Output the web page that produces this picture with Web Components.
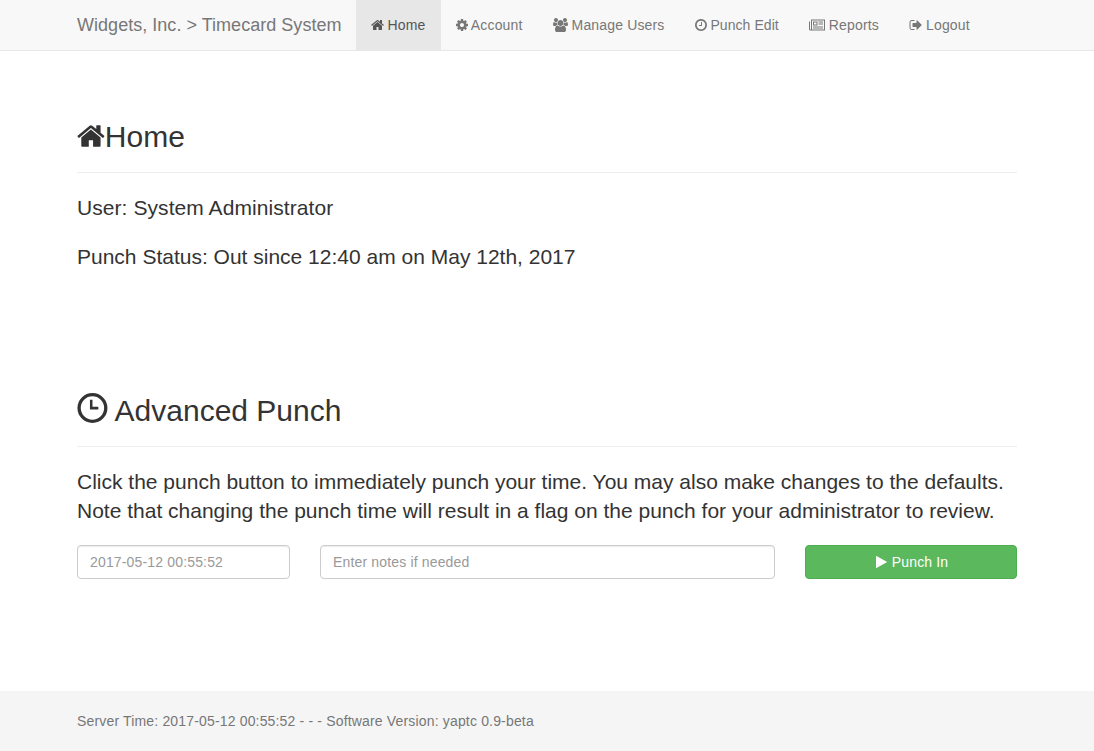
<!DOCTYPE html>
<html lang="en">
<head>
<meta charset="utf-8">
<title>Timecard System</title>
<style>
  html, body { margin: 0; padding: 0; }
  body {
    font-family: "Liberation Sans", Arial, sans-serif;
    font-size: 14px;
    line-height: 1.42857;
    color: #333;
    background: #fff;
    min-height: 751px;
    display: flex;
    flex-direction: column;
  }
</style>
</head>
<body>
  <app-navbar brand="Widgets, Inc. &gt; Timecard System">
    <nav-link active><app-icon name="home"></app-icon> Home</nav-link>
    <nav-link><app-icon name="cog"></app-icon> Account</nav-link>
    <nav-link><app-icon name="users"></app-icon> Manage Users</nav-link>
    <nav-link style="--track: .06px"><app-icon name="clock"></app-icon> Punch Edit</nav-link>
    <nav-link><app-icon name="news"></app-icon> Reports</nav-link>
    <nav-link><app-icon name="signout"></app-icon> Logout</nav-link>
  </app-navbar>

  <page-section first>
    <span slot="title"><app-icon name="home"></app-icon>Home</span>
    <lead-text style="letter-spacing: .07px">User: System Administrator</lead-text>
    <lead-text>Punch Status: Out since 12:40 am on May 12th, 2017</lead-text>
  </page-section>

  <page-section>
    <span slot="title"><app-icon name="time"></app-icon> Advanced Punch</span>
    <lead-text>Click the punch button to immediately punch your time. You may also make changes to the defaults. Note that changing the punch time will result in a flag on the punch for your administrator to review.</lead-text>
    <punch-form></punch-form>
  </page-section>

  <app-footer>Server Time: 2017-05-12 00:55:52 - - - Software Version: yaptc 0.9-beta</app-footer>

<script>
const ICONS = {
  home: ['64 0 1664 1792', 'M1472 992v480q0 26-19 45t-45 19h-384v-384h-256v384h-384q-26 0-45-19t-19-45v-480q0-1 .5-3t.5-3l575-474 575 474q1 2 1 6zm223-69l-62 74q-8 9-21 11h-3q-13 0-21-7l-692-577-692 577q-12 8-24 7-13-2-21-11l-62-74q-8-10-7-23.500t11-21.500l719-599q32-26 76-26t76 26l244 204v-195q0-14 9-23t23-9h192q14 0 23 9t9 23v408l219 182q10 8 11 21.500t-7 23.500z', 0.929],
  cog: ['128 0 1536 1792', 'M1152 896q0-106-75-181t-181-75-181 75-75 181 75 181 181 75 181-75 75-181zm512-109v222q0 12-8 23t-20 13l-185 28q-19 54-39 91 35 50 107 138 10 12 10 25t-9 23q-27 37-99 108t-94 71q-12 0-26-9l-138-108q-44 23-91 38-16 136-29 186-7 28-36 28h-222q-14 0-24.500-8.500t-11.500-21.500l-28-184q-49-16-90-37l-141 107q-10 9-25 9-14 0-25-11-126-114-165-168-7-10-7-23 0-12 8-23 15-21 51-66.500t54-70.500q-27-50-41-99l-183-27q-13-2-21-12.500t-8-23.500v-222q0-12 8-23t19-13l186-28q14-46 39-92-40-57-107-138-10-12-10-24 0-10 9-23 26-36 98.500-107.500t94.500-71.500q13 0 26 10l138 107q44-23 91-38 16-136 29-186 7-28 36-28h222q14 0 24.500 8.500t11.500 21.500l28 184q49 16 90 37l142-107q9-9 24-9 13 0 25 10 129 119 165 170 7 8 7 22 0 12-8 23-15 21-51 66.500t-54 70.500q26 50 41 98l183 28q13 2 21 12.500t8 23.500z', 0.857],
  users: ['0 0 1920 1792', 'M593 896q-162 5-265 128h-134q-82 0-138-40.500t-56-118.500q0-353 124-353 6 0 43.500 21t97.500 42.500 119 21.500q67 0 133-23-5 37-5 66 0 139 81 256zm1071 637q0 120-73 189.500t-194 69.500h-874q-121 0-194-69.500t-73-189.500q0-53 3.500-103.500t14-109 26.500-108.500 43-97.500 62-81 85.500-53.500 111.500-20q10 0 43 21.500t73 48 107 48 135 21.500 135-21.500 107-48 73-48 43-21.500q61 0 111.500 20t85.500 53.500 62 81 43 97.500 26.500 108.500 14 109 3.500 103.500zm-1024-1277q0 106-75 181t-181 75-181-75-75-181 75-181 181-75 181 75 75 181zm704 384q0 159-112.500 271.500t-271.500 112.500-271.500-112.500-112.500-271.500 112.500-271.500 271.500-112.500 271.500 112.500 112.500 271.500zm576 225q0 78-56 118.500t-138 40.500h-134q-103-123-265-128 81-117 81-256 0-29-5-66 66 23 133 23 59 0 119-21.500t97.500-42.500 43.500-21q124 0 124 353zm-128-609q0 106-75 181t-181 75-181-75-75-181 75-181 181-75 181 75 75 181z', 1.071],
  clock: ['0 0 1536 1792', 'M896 544v448q0 14-9 23t-23 9h-320q-14 0-23-9t-9-23v-64q0-14 9-23t23-9h224v-352q0-14 9-23t23-9h64q14 0 23 9t9 23zm416 352q0-148-73-273t-198-198-273-73-273 73-198 198-73 273 73 273 198 198 273 73 273-73 198-198 73-273zm224 0q0 209-103 385.500t-279.500 279.500-385.500 103-385.500-103-279.500-279.500-103-385.500 103-385.500 279.500-279.500 385.500-103 385.500 103 279.500 279.500 103 385.500z', 0.857],
  time: ['0 0 1536 1536', 'M768 0a768 768 0 1 0 0 1536a768 768 0 1 0 0-1536zM768 170a598 598 0 1 1 0 1196a598 598 0 1 1 0-1196zM640 340h130v370h300v130H640z', 1.03],
  news: ['0 0 2048 1792', 'M128 192h1920v1408H192q-192 0-192-192V448h128v960q0 64 64 64h64V192zM384 320v1152h1536V320zM512 448h576v512H512zM640 576v256h320V576zM1216 448h576v128h-576zM1216 704h576v128h-576zM512 1088h1280v128H512zM512 1280h1280v64H512z', 1.143],
  signout: ['0 0 1664 1792', 'M704 1440q0 4 1 20t.5 26.500-3 23.500-10 19.500-20.500 6.500h-320q-119 0-203.500-84.500t-84.500-203.500v-704q0-119 84.500-203.500t203.500-84.500h320q13 0 22.500 9.500t9.500 22.500q0 4 1 20t.5 26.500-3 23.500-10 19.500-20.500 6.500h-320q-66 0-113 47t-47 113v704q0 66 47 113t113 47h312l11.500 1 11.500 3 8 5.500 7 9 2 13.500zm928-544q0 26-19 45l-544 544q-19 19-45 19t-45-19-19-45v-288h-448q-26 0-45-19t-19-45v-384q0-26 19-45t45-19h448v-288q0-26 19-45t45-19 45 19l544 544q19 19 19 45z', 0.929],
  play: ['192 0 1408 1792', 'M1576 927l-1328 738q-23 13-39.500 3t-16.500-36v-1472q0-26 16.500-36t39.500 3l1328 738q23 13 23 31t-23 31z', 0.786]
};

class AppIcon extends HTMLElement {
  connectedCallback() {
    const [box, d, w] = ICONS[this.getAttribute('name')];
    this.attachShadow({ mode: 'open' });
    this.shadowRoot.innerHTML = `
      <style>
        :host { display: inline-block; width: ${w}em; height: 1em; vertical-align: -0.14em; }
        :host([name="time"]) { vertical-align: -0.07em; }
        svg { display: block; width: 100%; height: 100%; fill: currentColor; overflow: visible; }
      </style>
      <svg viewBox="${box}" aria-hidden="true"><path fill-rule="evenodd" d="${d}"></path></svg>
    `;
  }
}
customElements.define('app-icon', AppIcon);

class AppNavbar extends HTMLElement {
  connectedCallback() {
    this.attachShadow({ mode: 'open' });
    const brand = this.getAttribute('brand');
    this.shadowRoot.innerHTML = `
      <style>
        :host { display: block; background: #f8f8f8; border-bottom: 1px solid #e7e7e7; }
        .container { width: 970px; margin: 0 auto; display: flex; height: 50px; }
        .brand { padding: 15px 14px 15px 15px; font-size: 18px; line-height: 20px; color: #777; text-decoration: none; letter-spacing: .03px; }
        .links { display: flex; }
      </style>
      <div class="container">
        <a class="brand" href="#"></a>
        <div class="links"><slot></slot></div>
      </div>
    `;
    this.shadowRoot.querySelector('.brand').textContent = brand;
  }
}
customElements.define('app-navbar', AppNavbar);

class NavLink extends HTMLElement {
  connectedCallback() {
    this.attachShadow({ mode: 'open' });
    this.shadowRoot.innerHTML = `
      <style>
        :host { display: block; }
        a { display: block; padding: 15px; line-height: 20px; color: #777; text-decoration: none; font-size: 14px; height: 20px; white-space: nowrap; letter-spacing: var(--track, .16px); }
        :host([active]) a { background: #e7e7e7; color: #555; }
      </style>
      <a href="#"><slot></slot></a>
    `;
  }
}
customElements.define('nav-link', NavLink);

class PageSection extends HTMLElement {
  connectedCallback() {
    this.attachShadow({ mode: 'open' });
    this.shadowRoot.innerHTML = `
      <style>
        :host { display: block; width: 940px; margin: 0 auto; }
        :host { padding-top: 69px; }
        :host([first]) { padding-bottom: 33px; }
        .head { border-bottom: 1px solid #eee; padding-bottom: 19px; margin-bottom: 20px; }
        h1 { margin: 0; font-size: 30px; font-weight: 500; line-height: 33px; color: #333; }
      </style>
      <div class="head"><h1><slot name="title"></slot></h1></div>
      <slot></slot>
    `;
  }
}
customElements.define('page-section', PageSection);

class LeadText extends HTMLElement {
  connectedCallback() {
    this.attachShadow({ mode: 'open' });
    this.shadowRoot.innerHTML = `
      <style>
        :host { display: block; font-size: 21px; font-weight: 300; line-height: 29px; margin-bottom: 20px; color: #333; }
      </style>
      <slot></slot>
    `;
  }
}
customElements.define('lead-text', LeadText);

class PunchForm extends HTMLElement {
  connectedCallback() {
    this.attachShadow({ mode: 'open' });
    this.shadowRoot.innerHTML = `
      <style>
        :host { display: grid; grid-template-columns: 213px 455px 212px; column-gap: 30px; }
        input, button { box-sizing: border-box; height: 34px; width: 100%; font: 14px/20px "Liberation Sans", Arial, sans-serif; letter-spacing: .16px; border-radius: 4px; margin: 0; }
        input { padding: 6px 12px; color: #555; background: #fff; border: 1px solid #ccc; box-shadow: inset 0 1px 1px rgba(0,0,0,.075); outline: none; }
        input::placeholder { color: #999; opacity: 1; }
        button { color: #fff; background: #5cb85c; border: 1px solid #4cae4c; padding: 6px 12px 6px 14px; cursor: pointer; }
        button app-icon { margin-right: 1px; }
      </style>
      <input type="text" placeholder="2017-05-12 00:55:52">
      <input type="text" placeholder="Enter notes if needed">
      <button type="button"><app-icon name="play"></app-icon> Punch In</button>
    `;
  }
}
customElements.define('punch-form', PunchForm);

class AppFooter extends HTMLElement {
  connectedCallback() {
    this.attachShadow({ mode: 'open' });
    this.shadowRoot.innerHTML = `
      <style>
        :host { display: block; margin-top: auto; background: #f5f5f5; height: 60px; }
        .container { width: 940px; margin: 0 auto; line-height: 60px; color: #777; font-size: 14px; letter-spacing: .165px; }
      </style>
      <div class="container"><slot></slot></div>
    `;
  }
}
customElements.define('app-footer', AppFooter);
</script>
</body>
</html>
